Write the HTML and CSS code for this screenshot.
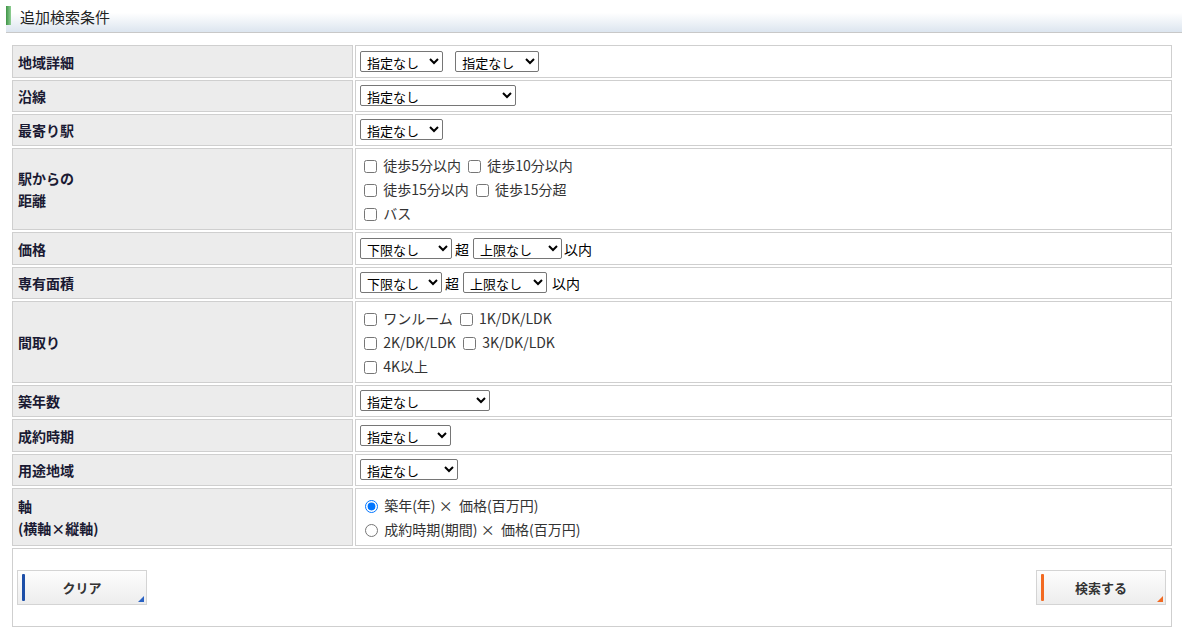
FILE: index.html
```html
<!DOCTYPE html>
<html lang="ja">
<head>
    <meta charset="UTF-8">
    <title>追加検索条件</title>
    <link rel="stylesheet" href="styles.css">
</head>
<body>

<div class="wrap">
    <h2 class="section-title"><span class="mark"></span>追加検索条件</h2>

    <table class="search-table">
        <tr class="tall">
            <th>地域詳細</th>
            <td>
                <select class="w83"><option>指定なし</option></select>
                <select class="w84 gap"><option>指定なし</option></select>
            </td>
        </tr>
        <tr>
            <th>沿線</th>
            <td><select class="w156"><option>指定なし</option></select></td>
        </tr>
        <tr>
            <th>最寄り駅</th>
            <td><select class="w83"><option>指定なし</option></select></td>
        </tr>
        <tr>
            <th>駅からの<br>距離</th>
            <td class="multi">
                <div><label><input type="checkbox"> 徒歩5分以内</label> <label><input type="checkbox"> 徒歩10分以内</label></div>
                <div><label><input type="checkbox"> 徒歩15分以内</label> <label><input type="checkbox"> 徒歩15分超</label></div>
                <div><label><input type="checkbox"> バス</label></div>
            </td>
        </tr>
        <tr class="tall">
            <th>価格</th>
            <td>
                <select class="w92"><option>下限なし</option></select><span class="sep">超</span><select class="w89"><option>上限なし</option></select><span class="after">以内</span>
            </td>
        </tr>
        <tr>
            <th>専有面積</th>
            <td>
                <select class="w82"><option>下限なし</option></select><span class="sep">超</span><select class="w84"><option>上限なし</option></select><span class="after gap">以内</span>
            </td>
        </tr>
        <tr>
            <th>間取り</th>
            <td class="multi">
                <div><label><input type="checkbox"> ワンルーム</label> <label><input type="checkbox"> 1K/DK/LDK</label></div>
                <div><label><input type="checkbox"> 2K/DK/LDK</label> <label><input type="checkbox"> 3K/DK/LDK</label></div>
                <div><label><input type="checkbox"> 4K以上</label></div>
            </td>
        </tr>
        <tr>
            <th>築年数</th>
            <td><select class="w130"><option>指定なし</option></select></td>
        </tr>
        <tr class="tall">
            <th>成約時期</th>
            <td><select class="w91"><option>指定なし</option></select></td>
        </tr>
        <tr>
            <th>用途地域</th>
            <td><select class="w98"><option>指定なし</option></select></td>
        </tr>
        <tr>
            <th>軸<br>(横軸×縦軸)</th>
            <td class="multi">
                <div><label><input type="radio" name="axis" checked> 築年(年) ×&nbsp; 価格(百万円)</label></div>
                <div><label><input type="radio" name="axis"> 成約時期(期間) ×&nbsp; 価格(百万円)</label></div>
            </td>
        </tr>
        <tr>
            <td colspan="2" class="actions">
                <div class="actions-inner">
                    <button class="btn btn-clear">クリア</button>
                    <button class="btn btn-search">検索する</button>
                </div>
            </td>
        </tr>
    </table>
</div>

</body>
</html>
```

FILE: styles.css
```css
body {
    margin: 0;
    font-family: "Noto Sans CJK JP", "Liberation Sans", sans-serif;
    font-size: 14px;
    color: #333;
    background-color: #fff;
}
.wrap {
    padding-left: 6px;
}
.section-title {
    margin: 0;
    height: 32px;
    border-bottom: 1px solid #c8c8c8;
    background: linear-gradient(to bottom, #ffffff 0%, #ffffff 40%, #dce5ef 100%);
    display: flex;
    align-items: center;
    font-size: 15px;
    font-weight: normal;
    color: #222;
}
.section-title .mark {
    width: 5px;
    height: 19px;
    margin-right: 9px;
    margin-top: -1px;
    background: linear-gradient(to right, #3f9447, #8fcf94);
}
.search-table {
    margin: 10px 0 0 4px;
    width: 1164px;
    border-spacing: 2px;
}
.search-table th,
.search-table td {
    border: 1px solid #cfcfcf;
    padding: 4px 4px;
    height: 22px;
    line-height: 22px;
    vertical-align: middle;
}
.search-table tr.tall th,
.search-table tr.tall td {
    height: 23px;
}
.search-table th {
    width: 330px;
    padding-left: 5px;
    background-color: #ececec;
    text-align: left;
    font-weight: bold;
    color: #1a1a33;
}
.search-table td.multi {
    line-height: 24px;
}
.search-table td.multi div {
    height: 24px;
}
.search-table input[type="checkbox"],
.search-table input[type="radio"] {
    vertical-align: -2px;
}
select {
    height: 21px;
    margin: 0;
    font-family: "Noto Sans CJK JP", sans-serif;
    font-size: 13px;
    color: #000;
    padding: 0 0 1px 2px;
    border: 1px solid #767676;
    border-radius: 2px;
    background-color: #fff;
    vertical-align: top;
}
select.gap {
    margin-left: 9px;
}
.w82 { width: 82px; }
.w83 { width: 83px; }
.w84 { width: 84px; }
.w89 { width: 89px; }
.w91 { width: 91px; }
.w92 { width: 92px; }
.w98 { width: 98px; }
.w130 { width: 130px; }
.w156 { width: 156px; }
.sep {
    margin: 0 4px 0 3px;
    color: #000;
}
.after {
    margin-left: 2px;
    color: #000;
}
.after.gap {
    margin-left: 5px;
}
.actions {
    background-color: #fff;
    padding: 21px 5px 21px 4px !important;
}
.actions-inner {
    display: flex;
    justify-content: space-between;
}
.btn {
    position: relative;
    width: 130px;
    height: 35px;
    border: 1px solid #d4d4d4;
    background: linear-gradient(to bottom, #fdfdfd, #ededed);
    font-family: "Noto Sans CJK JP", sans-serif;
    font-size: 13px;
    font-weight: bold;
    color: #333;
    padding: 0;
    cursor: pointer;
}
.btn::before {
    content: "";
    position: absolute;
    left: 4px;
    top: 3px;
    bottom: 3px;
    width: 3px;
    border-radius: 1px;
}
.btn::after {
    content: "";
    position: absolute;
    right: 2px;
    bottom: 2px;
    width: 0;
    height: 0;
    border-left: 6px solid transparent;
}
.btn-clear::before { background-color: #1d4fa8; }
.btn-clear::after { border-bottom: 6px solid #2a63c4; }
.btn-search::before { background-color: #f26a22; }
.btn-search::after { border-bottom: 6px solid #f26a22; }
```
